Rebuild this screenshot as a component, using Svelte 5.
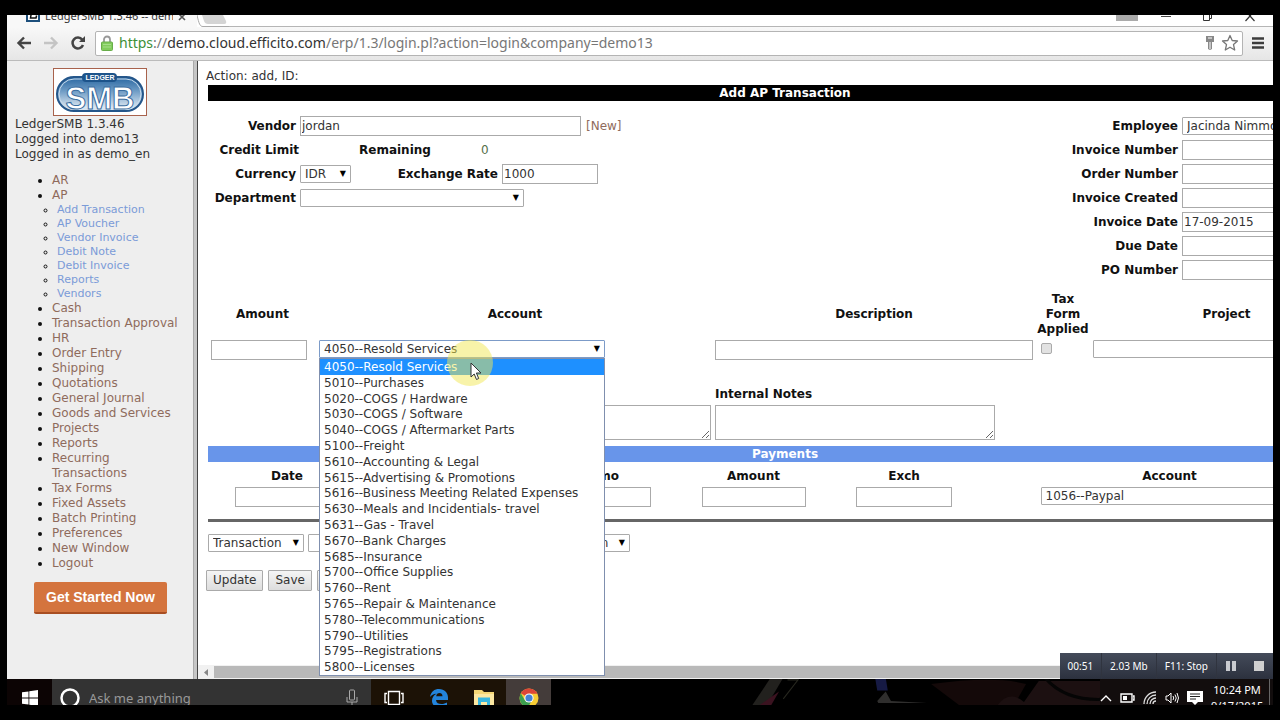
<script lang="ts">
	type Entry = { label: string; children?: string[] };

	const menu: Entry[] = [
		{ label: 'AR' },
		{
			label: 'AP',
			children: [
				'Add Transaction',
				'AP Voucher',
				'Vendor Invoice',
				'Debit Note',
				'Debit Invoice',
				'Reports',
				'Vendors'
			]
		},
		{ label: 'Cash' },
		{ label: 'Transaction Approval' },
		{ label: 'HR' },
		{ label: 'Order Entry' },
		{ label: 'Shipping' },
		{ label: 'Quotations' },
		{ label: 'General Journal' },
		{ label: 'Goods and Services' },
		{ label: 'Projects' },
		{ label: 'Reports' },
		{ label: 'Recurring Transactions' },
		{ label: 'Tax Forms' },
		{ label: 'Fixed Assets' },
		{ label: 'Batch Printing' },
		{ label: 'Preferences' },
		{ label: 'New Window' },
		{ label: 'Logout' }
	];

	const accounts = [
		'4050--Resold Services',
		'5010--Purchases',
		'5020--COGS / Hardware',
		'5030--COGS / Software',
		'5040--COGS / Aftermarket Parts',
		'5100--Freight',
		'5610--Accounting & Legal',
		'5615--Advertising & Promotions',
		'5616--Business Meeting Related Expenses',
		'5630--Meals and Incidentials- travel',
		'5631--Gas - Travel',
		'5670--Bank Charges',
		'5685--Insurance',
		'5700--Office Supplies',
		'5760--Rent',
		'5765--Repair & Maintenance',
		'5780--Telecommunications',
		'5790--Utilities',
		'5795--Registrations',
		'5800--Licenses'
	];

	const invoiceFields = [
		{ id: 'invnumber', label: 'Invoice Number', value: '' },
		{ id: 'ordnumber', label: 'Order Number', value: '' },
		{ id: 'crdate', label: 'Invoice Created', value: '' },
		{ id: 'transdate', label: 'Invoice Date', value: '17-09-2015' },
		{ id: 'duedate', label: 'Due Date', value: '' },
		{ id: 'ponumber', label: 'PO Number', value: '' }
	];

	let account = $state(accounts[0]);
</script>

<div class="screen">
	<div class="browser">
		<div class="tabstrip">
			<div class="tab">
				<svg class="favicon" width="14" height="16" viewBox="0 0 14 16">
					<rect x="1" y="1" width="12" height="14" fill="#fff" stroke="#1d4f7c" stroke-width="2" />
					<path d="M6 3 4.500 12H10l.6-2.500M4 12h2M5 3h3" fill="none" stroke="#111" stroke-width="1.500" />
				</svg>
				<span class="tab-title">LedgerSMB 1.3.46 -- dem</span>
				<button class="bare" aria-label="Close tab">
					<svg width="8" height="8" viewBox="0 0 8 8"><path d="m1 1 6 6M7 1 1 7" stroke="#555" stroke-width="1.600" /></svg>
				</button>
			</div>
			<svg class="edge" width="32" height="12" viewBox="0 0 32 12">
				<path d="M0 0c2 9 3 11.500 6 11.500h26" fill="none" stroke="#aaa" />
				<path d="M5 0h21l3 6q1 3-2 3H11Q8 9 7 6z" fill="#d4d4d4" />
			</svg>
			<div class="window-buttons">
				<span class="user-chip"></span>
				<button class="bare" aria-label="Minimize">
					<svg width="12" height="12" viewBox="0 0 12 12"><path d="M1 1.500h10" stroke="#444" /></svg>
				</button>
				<button class="bare" aria-label="Restore">
					<svg width="12" height="12" viewBox="0 0 12 12"><path d="M1.500 0v5.500h6V0M9.500 0v3.500h-2" fill="none" stroke="#333" /></svg>
				</button>
				<button class="bare" aria-label="Close">
					<svg width="12" height="12" viewBox="0 0 12 12"><path d="M1.500 6 6 1l4.500 5M5 0l1 1 1-1" fill="none" stroke="#333" stroke-width="1.200" /></svg>
				</button>
			</div>
		</div>

		<div class="toolbar">
			<button class="bare nav" aria-label="Back">
				<svg width="16" height="14" viewBox="0 0 16 14"><path d="M8 1.500 2.500 7 8 12.500M3 7h12" fill="none" stroke="#444" stroke-width="2.400" /></svg>
			</button>
			<button class="bare nav" aria-label="Forward">
				<svg width="16" height="14" viewBox="0 0 16 14"><path d="M8 1.500 13.500 7 8 12.500M13 7H1" fill="none" stroke="#c4c4c4" stroke-width="2.400" /></svg>
			</button>
			<button class="bare nav" aria-label="Reload">
				<svg width="16" height="14" viewBox="0 0 16 14">
					<path d="M12.200 3.600A5.400 5.400 0 1 0 13 9" fill="none" stroke="#444" stroke-width="2.500" />
					<path d="M15 0v6H9z" fill="#444" />
				</svg>
			</button>
			<div class="address">
				<svg width="12" height="16" viewBox="0 0 12 16">
					<path d="M3 8V4.500a3 3 0 0 1 6 0V8" fill="none" stroke="#999" stroke-width="1.800" />
					<rect x=".5" y="7" width="11" height="8.500" rx="1" fill="#82cc5c" stroke="#68ad4a" />
					<path d="M2 9.500h8M2 12h8" stroke="#a6de8b" />
				</svg>
				<div class="url"><span class="scheme">https</span><span class="slashes">://</span>demo.cloud.efficito.com<span class="path">/erp/1.3/login.pl?action=login&amp;company=demo13</span></div>
				<svg width="10" height="14" viewBox="0 0 10 14">
					<path d="M1 0h8v6H7v7l-2 1-2-1V6H1z" fill="#888" />
					<path d="M3 2h4M5 6v7" stroke="#fff" />
				</svg>
				<svg class="star" width="18" height="18" viewBox="0 0 18 18">
					<path d="m9 1.500 2.200 5 5.300.5-4 3.600 1.200 5.400L9 13.200 4.300 16l1.200-5.400-4-3.600 5.300-.5z" fill="#fff" stroke="#777" stroke-width="1.300" stroke-linejoin="round" />
				</svg>
			</div>
			<button class="bare nav" aria-label="Menu">
				<svg width="12" height="12" viewBox="0 0 12 12"><path d="M0 1.500h12M0 6h12M0 10.500h12" stroke="#3c3c3c" stroke-width="2.500" /></svg>
			</button>
		</div>

		<div class="frames">
			<aside>
				<a class="logo" href="#top" aria-label="LedgerSMB">
					<svg width="92" height="46" viewBox="0 0 92 46">
						<defs>
							<linearGradient id="pill" x1="0" y1="0" x2="0" y2="1">
								<stop offset="0" stop-color="#2765a0" />
								<stop offset=".4" stop-color="#6c9ac4" />
								<stop offset="1" stop-color="#f1f6fa" />
							</linearGradient>
						</defs>
						<rect x="3" y="8" width="86" height="34" rx="17" fill="url(#pill)" stroke="#24568a" stroke-width="2" />
						<rect x="5" y="10" width="82" height="30" rx="15" fill="none" stroke="#c9dcec" />
						<text x="46" y="40" text-anchor="middle" class="logo-big">SMB</text>
						<rect x="28" y="4" width="35" height="9" rx="4" fill="#1d548b" />
						<text x="46" y="11" text-anchor="middle" class="logo-small">LEDGER</text>
					</svg>
				</a>
				<p class="session">LedgerSMB 1.3.46<br />Logged into demo13<br />Logged in as demo_en</p>
				<ul class="menu">
					{#each menu as entry}
						<li>
							<a href="#menu">{entry.label}</a>
							{#if entry.children}
								<ul class="submenu">
									{#each entry.children as child}
										<li><a href="#menu">{child}</a></li>
									{/each}
								</ul>
							{/if}
						</li>
					{/each}
				</ul>
				<button class="started">Get Started Now</button>
			</aside>

			<main>
				<form>
					<p class="action">Action: add, ID:</p>
					<h1 class="bar">Add AP Transaction</h1>

					<div class="head">
						<div class="fields">
							<div class="field">
								<label for="vendor">Vendor</label>
								<input id="vendor" class="vendor" value="jordan" />
								<a href="#new">[New]</a>
							</div>
							<div class="field">
								<b class="caption credit">Credit Limit</b>
								<b class="remaining">Remaining</b>
								<span class="zero">0</span>
							</div>
							<div class="field">
								<label for="currency">Currency</label>
								<span class="select currency"><select id="currency"><option>IDR</option></select></span>
								<label class="rate-label" for="rate">Exchange Rate</label>
								<input id="rate" class="short" value="1000" />
							</div>
							<div class="field">
								<label for="department">Department</label>
								<span class="select department"><select id="department"><option></option></select></span>
							</div>
						</div>
						<div class="fields invoice">
							<div class="field">
								<label for="employee">Employee</label>
								<span class="select wide"><select id="employee"><option>Jacinda Nimmo</option></select></span>
							</div>
							{#each invoiceFields as field}
								<div class="field">
									<label for={field.id}>{field.label}</label>
									<input id={field.id} class="wide" value={field.value} />
								</div>
							{/each}
						</div>
					</div>

					<table class="lines">
						<colgroup>
							<col class="c-amount" /><col class="c-account" /><col class="c-desc" /><col class="c-tax" /><col />
						</colgroup>
						<thead>
							<tr>
								<th>Amount</th>
								<th>Account</th>
								<th>Description</th>
								<th>Tax Form Applied</th>
								<th>Project</th>
							</tr>
						</thead>
						<tbody>
							<tr>
								<td><input class="short" aria-label="Amount" /></td>
								<td>
									<div class="picker">
										<span class="select open">
											<select aria-label="Account" bind:value={account}>
												{#each accounts as name}
													<option>{name}</option>
												{/each}
											</select>
										</span>
										<ul class="options" role="listbox" aria-label="Accounts">
											{#each accounts as name}
												<li role="option" aria-selected={name === account} class:selected={name === account}>{name}</li>
											{/each}
										</ul>
										<span class="halo"></span>
										<svg class="pointer" width="12" height="19" viewBox="0 0 12 19">
											<path d="M1 1v14l3.200-3 2.300 5.500 2.200-1L6.400 11H11z" fill="#fff" stroke="#333" />
										</svg>
									</div>
								</td>
								<td><input class="fill" aria-label="Description" /></td>
								<td><input class="tick" type="checkbox" aria-label="Tax form applied" /></td>
								<td><span class="select fill"><select aria-label="Project"><option></option></select></span></td>
							</tr>
						</tbody>
					</table>

					<div class="notes">
						<textarea aria-label="Notes"></textarea>
						<div>
							<label for="intnotes">Internal Notes</label>
							<textarea id="intnotes"></textarea>
						</div>
					</div>

					<h2 class="bar payments-title">Payments</h2>
					<table class="payments">
						<colgroup>
							<col class="p-date" /><col class="p-text" /><col class="p-text" /><col class="p-text" /><col class="p-exch" /><col />
						</colgroup>
						<thead>
							<tr>
								<th>Date</th>
								<th aria-label="Source"></th>
								<th>Memo</th>
								<th>Amount</th>
								<th>Exch</th>
								<th>Account</th>
							</tr>
						</thead>
						<tbody>
							<tr>
								<td><input class="medium" aria-label="Date" /></td>
								<td><input class="medium" aria-label="Source" /></td>
								<td><input class="medium" aria-label="Memo" /></td>
								<td><input class="medium" aria-label="Amount" /></td>
								<td><input class="short" aria-label="Exchange rate" /></td>
								<td>
									<span class="select paypal"><select aria-label="Payment account"><option>1056--Paypal</option></select></span>
								</td>
							</tr>
						</tbody>
					</table>
					<hr />

					<div class="output">
						<span class="select transaction"><select aria-label="Form"><option>Transaction</option></select></span>
						<span class="select language"><select aria-label="Language"><option></option></select></span>
						<span class="select media"><select aria-label="Media"><option>Screen</option></select></span>
					</div>
					<div class="actions">
						<button type="button">Update</button>
						<button type="button">Save</button>
						<button type="button" class="covered" aria-label="Post"></button>
					</div>
				</form>
				<div class="scrollbar">
					<svg width="16" height="12" viewBox="0 0 16 12"><path d="M10 3v7L6 6.500z" fill="#888" /></svg>
					<div class="thumb"></div>
				</div>
			</main>
		</div>

		<div class="recorder">
			<span>00:51</span>
			<span>2.03 Mb</span>
			<span>F11: Stop</span>
			<button class="bare" aria-label="Pause">
				<svg width="10" height="10" viewBox="0 0 10 10"><path d="M0 0h4v10H0zM6 0h4v10H6z" fill="#c9cbd0" /></svg>
			</button>
			<button class="bare" aria-label="Stop">
				<svg width="10" height="10" viewBox="0 0 10 10"><path d="M0 0h10v10H0z" fill="#d0d0d0" /></svg>
			</button>
		</div>
	</div>

	<div class="taskbar">
		<button class="bare start" aria-label="Start">
			<svg width="16" height="16" viewBox="0 0 16 16"><path d="M0 2.300 6.500 1.400v6.200H0zM7.300 1.300 16 0v7.600H7.300zM0 8.400h6.500v6.200L0 13.700zM7.300 8.400H16V16l-8.700-1.300z" fill="#fff" /></svg>
		</button>
		<div class="search">
			<svg width="20" height="20" viewBox="0 0 20 20"><circle cx="10" cy="10" r="8.500" fill="none" stroke="#fff" stroke-width="2.500" /></svg>
			<input aria-label="Search" placeholder="Ask me anything" />
			<svg width="12" height="18" viewBox="0 0 12 18">
				<rect x="3.500" y="1" width="5" height="10" rx="1" fill="none" stroke="#aaa" />
				<path d="M1 8v5h10V8M6 13v4M3 17h6" fill="none" stroke="#aaa" />
			</svg>
		</div>
		<button class="bare app warm" aria-label="Task view">
			<svg width="20" height="16" viewBox="0 0 20 16">
				<path d="M4.500 1.500h11v13h-11zM3 3.500H1v9h2M17 3.500h2v9h-2" fill="none" stroke="#fff" stroke-width="1.400" />
			</svg>
		</button>
		<button class="bare app warm" aria-label="Edge">
			<svg width="20" height="20" viewBox="0 0 20 20">
				<path d="M1 9C2 3.500 5.500 1 10 1c5.500 0 9 4 9 8.500V12H7c.3 3 2.500 4 5.500 4 2 0 4-.6 5.500-1.500V18c-2 1.200-4 1.700-7 1.700-5 0-8-3-8-7 0-3 1.500-5.500 4.500-7C4.500 6 2.500 7 1 9zm6.200-.8h6.300C13.500 6 12.200 5 10.500 5c-1.800 0-3 1.200-3.300 3.200z" fill="#2384dc" />
			</svg>
		</button>
		<button class="bare app warm" aria-label="File Explorer">
			<svg width="20" height="18" viewBox="0 0 20 18">
				<path d="M0 1h8l2 2h10v15H0z" fill="#f3d676" />
				<path d="M0 5h20v13H0z" fill="#fbe7a1" />
				<path d="M4 18V8.500h12V18h-3v-5H7v5z" fill="#38b6df" />
			</svg>
		</button>
		<button class="bare app active" aria-label="Chrome">
			<svg width="20" height="20" viewBox="0 0 20 20">
				<circle cx="10" cy="10" r="9.500" fill="#f7cd35" />
				<path d="M10 10 1.800 5.200A9.500 9.500 0 0 1 18.500 5.800H10z" fill="#dd4638" />
				<path d="M1.800 5.200A9.500 9.500 0 0 0 9 19.400L13 12l-7 .5z" fill="#3c9f50" />
				<circle cx="10" cy="10" r="4.600" fill="#fff" />
				<circle cx="10" cy="10" r="3.600" fill="#4583d6" />
			</svg>
		</button>
		<svg class="wallpaper" viewBox="0 0 520 27" preserveAspectRatio="xMidYMid slice">
			<path d="M190 27 208 0h12l-16 27z" fill="#22211e" />
			<path d="m196 27 20-14-8 14z" fill="#3b1320" />
			<path d="M220 20 234 2l-10 0" fill="none" stroke="#27271f" />
			<path d="M307 0h10l2 12h-10z" fill="#161a44" />
			<path d="m309 22 8-9 5 9 34 2h-46z" fill="#2f2e2d" />
			<path d="M360 6q60-8 90 0l-12 21h-50z" fill="#140909" />
			<path d="M422 27q12-16 26-4l14-20h60v24z" fill="#1c1011" />
			<path d="M468 0q20 24 62 20" fill="none" stroke="#050505" stroke-width="3" />
		</svg>
		<div class="tray">
			<svg width="12" height="8" viewBox="0 0 12 8"><path d="m1 7 5-5 5 5" fill="none" stroke="#fff" stroke-width="1.400" /></svg>
			<svg width="15" height="10" viewBox="0 0 15 10">
				<path d="M1 1h11v8H1zM13 3h1v4h-1" fill="none" stroke="#fff" stroke-width="1.400" />
				<path d="M3 3h4v4H3z" fill="#fff" />
			</svg>
			<svg width="14" height="14" viewBox="0 0 14 14">
				<path d="M1 13A12 12 0 0 1 13 1M4 13a9 9 0 0 1 9-9M7 13a6 6 0 0 1 6-6M10 13a3 3 0 0 1 3-3" fill="none" stroke="#ddd" stroke-width="1.300" />
			</svg>
			<svg width="14" height="12" viewBox="0 0 14 12">
				<path d="M1 4h2l3-3v10L3 8H1zM8 4q1.500 2 0 4M10 2.500q2.500 3.500 0 7M12 1q3 5 0 10" fill="none" stroke="#fff" />
			</svg>
			<svg width="16" height="16" viewBox="0 0 16 16">
				<path d="M0 1h16v11h-5l-3 3-3-3H0z" fill="#fff" />
				<path d="M3 4h10M3 6.500h10M3 9h6" stroke="#222" />
			</svg>
			<div class="clock">10:24 PM<br />9/17/2015</div>
			<span class="peek"></span>
		</div>
	</div>
</div>

<style>
	:global(body) {
		background: #000;
	}

	.screen {
		box-sizing: border-box;
		height: 100vh;
		min-height: 720px;
		padding: 15px 7px;
		display: flex;
		flex-direction: column;
		overflow: hidden;
		background: #000;
		font: 12px/15px Verdana, 'DejaVu Sans', sans-serif;
		color: #333;
	}

	.screen :global(*) {
		box-sizing: border-box;
	}

	svg {
		flex: none;
		display: block;
	}

	a {
		color: #8f6b5c;
		text-decoration: none;
	}

	input,
	select,
	textarea,
	button {
		margin: 0;
		font: inherit;
		color: inherit;
	}

	.bare {
		border: 0;
		padding: 0;
		background: none;
		display: flex;
		align-items: center;
		justify-content: center;
	}

	.browser {
		flex: 1;
		min-height: 0;
		position: relative;
		display: flex;
		flex-direction: column;
		background: #fff;
	}

	/* window chrome */
	.tabstrip {
		height: 12px;
		flex: none;
		display: flex;
		overflow: hidden;
		background: #fff;
	}

	.tab {
		width: 190px;
		height: 22px;
		margin-top: -9px;
		padding-left: 19px;
		display: flex;
		align-items: flex-start;
		gap: 5px;
		background: #f8f8f8;
		font: 11px/20px 'Noto Sans', sans-serif;
	}

	.tab .bare {
		margin: 7px 0 0;
	}

	.tab-title {
		width: 128px;
		white-space: nowrap;
		overflow: hidden;
	}

	.window-buttons {
		flex: 1;
		display: flex;
		justify-content: flex-end;
		align-items: flex-start;
		gap: 30px;
		padding-right: 17px;
		border-bottom: 1px solid #b5b5b5;
	}

	.user-chip {
		width: 22px;
		height: 6px;
		margin-right: -8px;
		background: #aaa;
	}

	.toolbar {
		height: 34px;
		flex: none;
		display: flex;
		align-items: center;
		gap: 11px;
		padding: 0 9px 1px;
		background: linear-gradient(#f8f8f8, #e6e6e6);
		border-bottom: 1px solid #bbb;
	}

	.address {
		flex: 1;
		height: 25px;
		margin: 0 -2px;
		display: flex;
		align-items: center;
		gap: 6px;
		padding: 0 3px 0 5px;
		background: #fff;
		border: 1px solid #b4b4b4;
		border-radius: 2px;
	}

	.url {
		flex: 1;
		font: 14px/20px 'Noto Sans', sans-serif;
		color: #333;
		white-space: nowrap;
	}

	.scheme {
		color: #3d8f37;
	}

	.slashes,
	.path {
		color: #777;
	}

	.frames {
		flex: 1;
		min-height: 0;
		display: flex;
	}

	/* navigation frame */
	aside {
		width: 191px;
		flex: none;
		padding: 7px 12px 0 8px;
		background: #eee;
		border-right: 1px solid #444;
		box-shadow: inset -3px 0 #c6c6c6, inset -4px 0 #aaa;
	}

	.logo {
		display: block;
		width: 94px;
		margin-left: 38px;
		border: 1px solid #a8624c;
		background: #fff;
	}

	.logo-small {
		font: bold 7px 'Liberation Sans', sans-serif;
		fill: #fff;
	}

	.logo-big {
		font: bold 31px 'Liberation Sans', sans-serif;
		fill: #fff;
		stroke: #3a6da0;
		stroke-width: 1px;
	}

	.session {
		margin: 1px 0 11px;
	}

	.menu,
	.submenu {
		margin: 0;
		padding: 0 0 0 37px;
		color: #111;
	}

	.submenu {
		padding-left: 5px;
		font-size: 11px;
		line-height: 14px;
		list-style: circle;
	}

	.submenu a {
		color: #7b9bd8;
	}

	.started {
		display: block;
		margin: 11px 0 0 19px;
		padding: 0 12px;
		height: 32px;
		border: 0;
		border-bottom: 2px solid #a84e22;
		border-radius: 2px;
		background: #d4743e;
		color: #fff;
		font: bold 14px/28px 'Liberation Sans', sans-serif;
		white-space: nowrap;
	}

	/* work frame */
	main {
		flex: 1;
		min-width: 0;
		display: flex;
		flex-direction: column;
		overflow: hidden;
	}

	form {
		flex: 1;
		min-width: 1164px;
		padding: 8px 0 0 8px;
	}

	.action {
		margin: 0 0 1px;
	}

	.bar {
		margin: 0 0 0 2px;
		font-size: 12px;
		line-height: 16px;
		text-align: center;
		color: #fff;
		background: #000;
	}

	.payments-title {
		background: #6895ea;
	}

	label,
	b,
	th {
		font-weight: bold;
		color: #111;
	}

	.head {
		display: flex;
		justify-content: space-between;
		padding: 13px 3px 0 2px;
	}

	.field {
		height: 24px;
		display: flex;
		align-items: center;
		gap: 4px;
	}

	.field label,
	.caption {
		width: 88px;
		text-align: right;
	}

	.invoice .field label {
		width: 120px;
	}

	.field .credit {
		width: 91px;
	}

	.remaining {
		margin-left: 56px;
	}

	.zero {
		margin-left: 46px;
		color: #566f4a;
	}

	.field .rate-label {
		width: 102px;
		margin-left: 41px;
	}

	input {
		height: 20px;
		padding: 0 1px;
		border: 1px solid #aaa;
		background: #fff;
	}

	.vendor {
		width: 281px;
		margin-right: 1px;
	}

	.short {
		width: 96px;
	}

	.medium {
		width: 104px;
	}

	.wide {
		width: 177px;
	}

	.fill {
		width: 100%;
	}

	.select {
		position: relative;
		display: inline-block;
		height: 18px;
		vertical-align: top;
	}

	.select select {
		appearance: none;
		display: block;
		width: 100%;
		height: 18px;
		padding: 0 4px;
		border: 1px solid #aaa;
		border-radius: 1px;
		background: #fff;
		line-height: 15px;
	}

	.select::after {
		content: '▼';
		position: absolute;
		top: 1px;
		right: 5px;
		font-size: 8px;
		line-height: 15px;
		color: #000;
		pointer-events: none;
	}

	.currency {
		width: 51px;
	}

	.department {
		width: 224px;
	}

	table {
		width: 1154px;
		margin-left: 2px;
		table-layout: fixed;
		border-collapse: collapse;
	}

	th {
		padding: 0 2px;
	}

	td {
		padding: 0 2px;
		vertical-align: top;
	}

	.lines {
		margin-top: 10px;
	}

	.lines td {
		padding-top: 3px;
	}

	.lines td:first-child {
		padding-left: 3px;
	}

	.c-amount {
		width: 109px;
	}

	.c-account {
		width: 396px;
	}

	.c-desc {
		width: 322px;
	}

	.c-tax {
		width: 56px;
	}

	.lines .tick {
		appearance: none;
		display: block;
		width: 11px;
		height: 11px;
		margin: 3px 0 0 4px;
		border-radius: 2px;
		background: #e2e2e2;
	}

	.picker {
		position: relative;
		width: 286px;
	}

	.open {
		width: 100%;
	}

	.open select {
		border-color: #7c9bc8;
		outline: none;
	}

	.options {
		position: absolute;
		z-index: 2;
		top: 18px;
		left: 0;
		width: 100%;
		height: 318px;
		margin: 0;
		padding: 0;
		display: grid;
		grid-auto-rows: 1fr;
		list-style: none;
		background: #fff;
		border: 1px solid #7f8fae;
	}

	.options li {
		min-height: 0;
		padding-left: 4px;
		line-height: 16px;
	}

	.options .selected {
		background: #1e90ff;
		color: #fff;
	}

	.halo {
		position: absolute;
		z-index: 3;
		top: 0;
		left: 128px;
		width: 46px;
		height: 46px;
		border-radius: 50%;
		background: rgba(242, 231, 84, 0.5);
	}

	.pointer {
		position: absolute;
		z-index: 4;
		top: 22px;
		left: 151px;
	}

	.notes {
		display: flex;
		align-items: flex-end;
		gap: 4px;
		padding: 27px 0 6px 225px;
	}

	.notes label {
		display: block;
		margin-bottom: 3px;
	}

	textarea {
		display: block;
		width: 280px;
		height: 35px;
		border: 1px solid #aaa;
		background: #fff;
	}

	.payments {
		margin-top: 7px;
		text-align: center;
	}

	.payments td {
		padding-top: 3px;
	}

	.p-date {
		width: 158px;
	}

	.p-text {
		width: 155px;
	}

	.p-exch {
		width: 146px;
	}

	.paypal {
		width: 258px;
		text-align: left;
	}

	hr {
		height: 3px;
		margin: 12px 0 12px 2px;
		border: 0;
		background: #666;
	}

	.output {
		display: flex;
		gap: 4px;
		padding-left: 2px;
	}

	.transaction {
		width: 96px;
	}

	.language {
		width: 250px;
	}

	.media {
		width: 68px;
	}

	.actions {
		display: flex;
		gap: 5px;
		margin-top: 18px;
	}

	.actions button {
		height: 21px;
		padding: 0 6px;
		border: 1px solid #aaa;
		border-radius: 1px;
		background: linear-gradient(#f5f5f5, #ddd);
	}

	.actions .covered {
		width: 45px;
	}

	.scrollbar {
		height: 14px;
		flex: none;
		display: flex;
		align-items: center;
		background: #f1f1f1;
	}

	.thumb {
		flex: 1;
		height: 12px;
		background: #b9b9b9;
	}

	/* screen recorder */
	.recorder {
		position: absolute;
		right: 0;
		bottom: 0;
		z-index: 5;
		height: 26px;
		display: flex;
		align-items: center;
		background: linear-gradient(#444b5a, #2c313e);
		color: #fff;
		font: 10px/26px 'Noto Sans', sans-serif;
		white-space: nowrap;
	}

	.recorder span {
		padding: 0 8px;
		border-right: 1px solid #30343f;
	}

	.recorder button {
		width: 28px;
		height: 26px;
	}

	/* taskbar */
	.taskbar {
		height: 26px;
		flex: none;
		display: flex;
		overflow: hidden;
		position: relative;
		background: #000;
		font-family: 'Noto Sans', sans-serif;
	}

	.taskbar > * {
		height: 37px;
		flex: none;
	}

	.start {
		width: 45px;
		background: #0c0404;
	}

	.search {
		width: 319px;
		display: flex;
		align-items: center;
		gap: 8px;
		padding: 0 13px 0 8px;
		background: #333;
	}

	.search input {
		flex: 1;
		min-width: 0;
		border: 0;
		background: none;
		font-size: 13px;
	}

	.search input::placeholder {
		color: #999;
		opacity: 1;
	}

	.app {
		width: 45px;
	}

	.warm {
		background: #1c1206;
	}

	.active {
		background: #443c3a;
	}

	.taskbar .wallpaper {
		flex: 1;
		min-width: 0;
		height: 26px;
	}

	.tray {
		display: flex;
		align-items: center;
		gap: 8px;
		background: #120d0d;
		color: #fff;
	}

	.clock {
		width: 52px;
		margin-right: 6px;
		font-size: 11px;
		line-height: 16px;
		text-align: center;
		white-space: nowrap;
	}

	.peek {
		width: 4px;
		height: 26px;
		margin-left: -8px;
		align-self: flex-start;
		border-left: 1px solid #666;
	}
</style>
